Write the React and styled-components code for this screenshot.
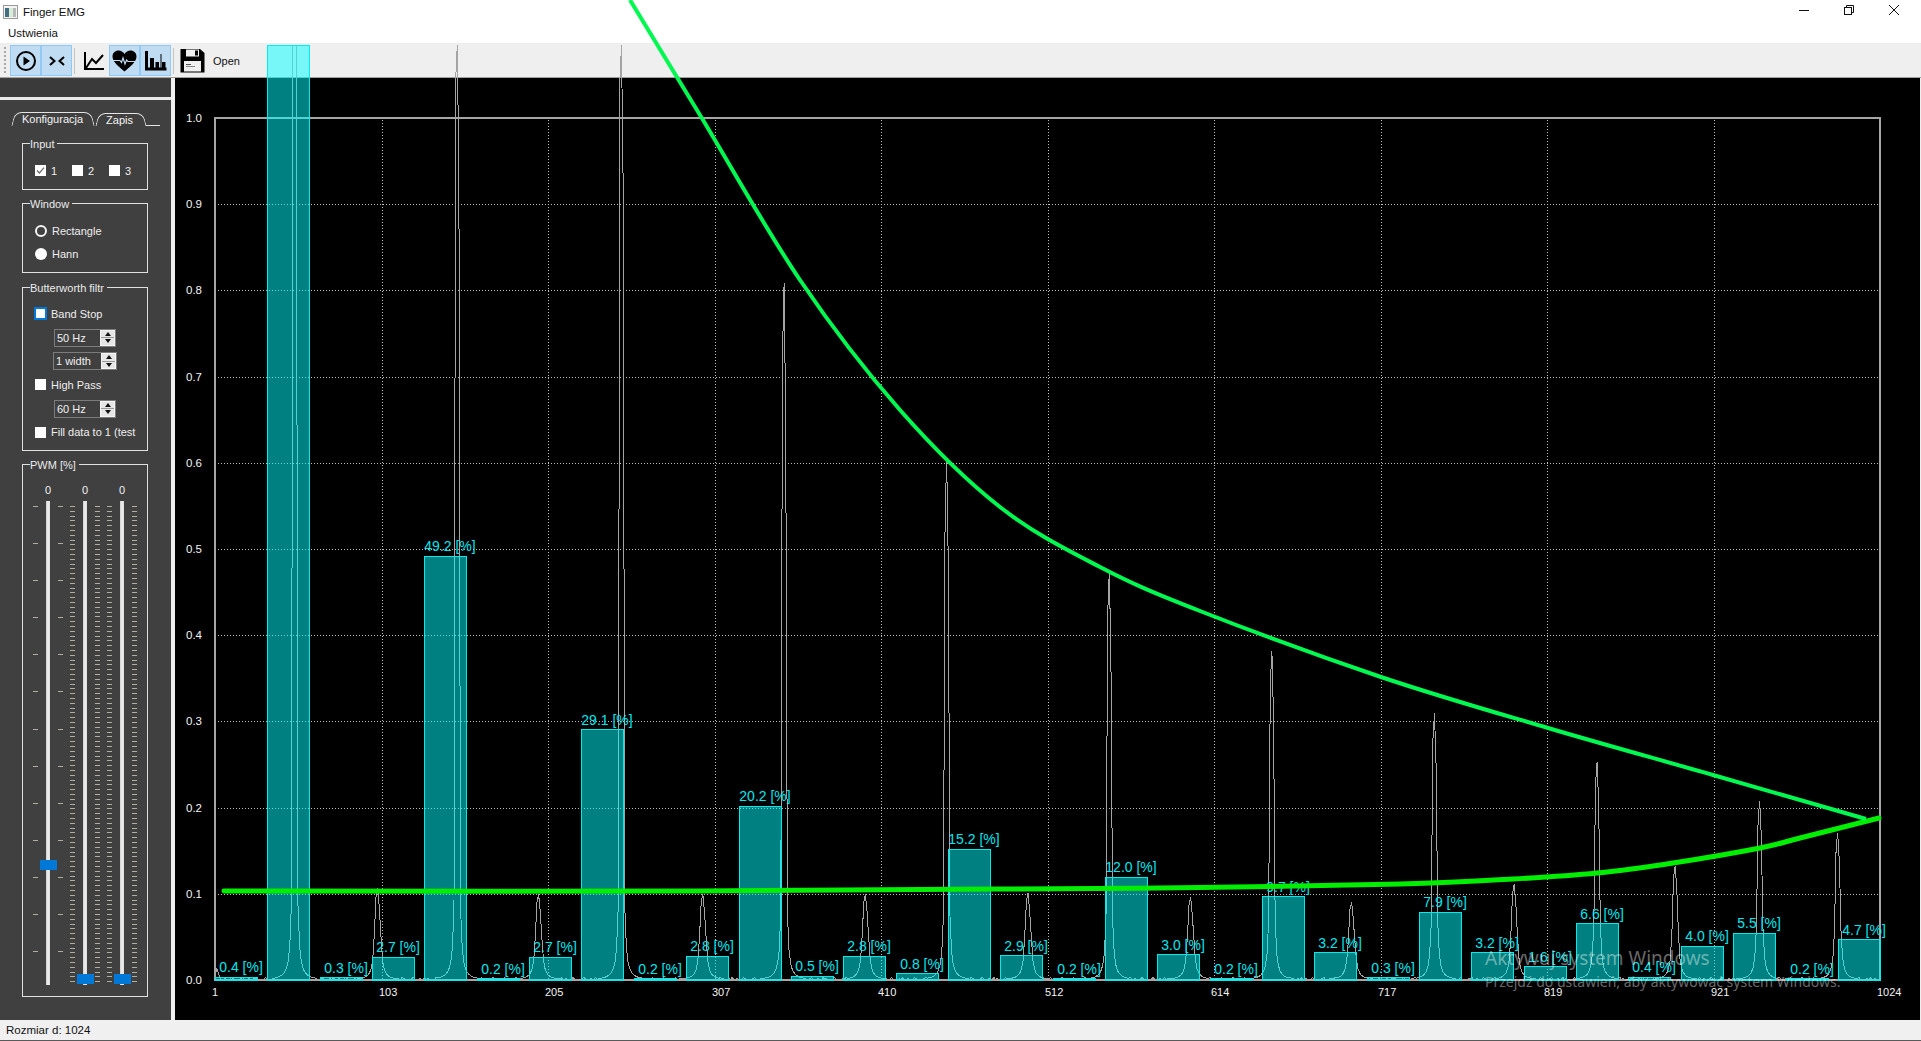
import React from 'react'
import styled, { createGlobalStyle } from 'styled-components'

const GlobalStyle = createGlobalStyle`
  html, body {
    margin: 0;
    padding: 0;
    height: 100%;
    overflow: hidden;
    background: #fff;
    font-family: "Liberation Sans", Arial, sans-serif;
    font-size: 11px;
  }
`

const Window = styled.div`
  width: 1921px;
  height: 1041px;
  display: flex;
  flex-direction: column;
  background: #fff;
  color: #000;
`

const TitleBar = styled.div`
  height: 23px;
  display: flex;
  align-items: center;
  padding-left: 3px;
  font-size: 11.5px;
  color: #111;
`

const TitleText = styled.span`
  margin-left: 5px;
  flex: 1;
`

const WinButton = styled.div`
  width: 45px;
  height: 23px;
  display: flex;
  align-items: center;
  justify-content: center;
  padding-bottom: 3px;
  box-sizing: border-box;
`

const WinButtons = styled.div`
  display: flex;
  margin-right: 5px;
`

const MenuBar = styled.div`
  height: 20px;
  display: flex;
  align-items: center;
  padding-left: 8px;
  border-bottom: 1px solid #ededed;
  color: #111;
  font-size: 11.5px;
`

const Toolbar = styled.div`
  height: 33px;
  display: flex;
  align-items: center;
  background: #efefef;
  border-bottom: 1px solid #a0a0a0;
  padding-left: 4px;
`

const Grip = styled.div`
  width: 2px;
  height: 27px;
  margin-right: 4px;
  background: repeating-linear-gradient(to bottom, #a8a8a8 0 2px, transparent 2px 4px);
`

const ToolButton = styled.div`
  width: 31px;
  height: 31px;
  box-sizing: border-box;
  display: flex;
  align-items: center;
  justify-content: center;
  background: ${p => (p.$checked ? '#c0dcf3' : 'transparent')};
  border: 1px solid ${p => (p.$checked ? '#90c8f6' : 'transparent')};
`

const ToolSeparator = styled.div`
  width: 1px;
  height: 26px;
  margin: 0 ${p => p.$right || 3}px 0 2px;
  background: #c4c4c4;
`

const OpenLabel = styled.span`
  margin-left: 8px;
  font-size: 11px;
  color: #111;
`

const Body = styled.div`
  flex: 1;
  display: flex;
  min-height: 0;
  background: #f0f0f0;
  padding-right: 1px;
`

const Sidebar = styled.div`
  width: 171px;
  display: flex;
  flex-direction: column;
  background: #404040;
  color: #eee;
  flex-shrink: 0;
`

const TopStrip = styled.div`
  height: 18px;
  margin-top: 1px;
  background: #3a3a3a;
  border-bottom: 3px solid #e8e8e8;
`

const Tabs = styled.div`
  display: flex;
  height: 15px;
  margin: 12px 11px 0 11px;
  width: 149px;
  box-sizing: border-box;
`

const Tab = styled.div`
  position: relative;
  width: ${p => p.$w}px;
  height: ${p => (p.$active ? 14 : 13)}px;
  margin-top: ${p => (p.$active ? 0 : 1)}px;
  display: flex;
  align-items: center;
  justify-content: center;
  padding-right: ${p => (p.$active ? 1 : 2)}px;
  box-sizing: border-box;
  color: #f4f4f4;

  &::before,
  &::after {
    content: '';
    position: absolute;
    top: 0;
    bottom: 0;
    width: 50%;
    border-top: 1px solid #e4e4e4;
  }
  &::before {
    left: 2px;
    border-left: 1px solid #e4e4e4;
    border-top-left-radius: 7px;
    transform: skewX(-14deg);
  }
  &::after {
    right: 2px;
    border-right: 1px solid #e4e4e4;
    border-top-right-radius: 7px;
    transform: skewX(14deg);
  }
`

const TabFill = styled.div`
  flex: 1;
  height: 13px;
  border-bottom: 1px solid #e4e4e4;
`

const Group = styled.fieldset`
  margin: ${p => p.$mt}px 0 0 22px;
  padding: 0;
  width: 126px;
  height: ${p => p.$h}px;
  box-sizing: border-box;
  border: 1px solid #e0e0e0;
  min-width: 0;
  overflow: hidden;
`

const Legend = styled.legend`
  margin-left: 7px;
  padding: 0 3px 0 0;
  height: 14px;
  line-height: 16px;
  color: #eaeaea;
`

const InputRow = styled.div`
  display: flex;
  padding: 15px 0 0 12px;
  gap: 8px;
`

const CheckItem = styled.label`
  display: flex;
  align-items: center;
  gap: 5px;
  height: 23.7px;
  white-space: nowrap;
`

const InlineCheck = styled(CheckItem)`
  height: 11px;
  width: 29px;
`

const Box = styled.span`
  width: ${p => (p.$focus ? 13 : 11)}px;
  height: ${p => (p.$focus ? 13 : 11)}px;
  flex-shrink: 0;
  box-sizing: border-box;
  background: #fff;
  border: ${p => (p.$focus ? '2px solid #0078d7' : 'none')};
  margin-left: ${p => (p.$focus ? -1 : 0)}px;
  margin-right: ${p => (p.$focus ? -1 : 0)}px;
  display: flex;
  align-items: center;
  justify-content: center;
`

const RadioStack = styled.div`
  display: flex;
  flex-direction: column;
  padding: 15px 0 0 12px;
  gap: 11px;
`

const RadioItem = styled.label`
  display: flex;
  align-items: center;
  gap: 5px;
  height: 12px;
`

const RadioDot = styled.span`
  width: 12px;
  height: 12px;
  border-radius: 50%;
  box-sizing: border-box;
  background: ${p => (p.$on ? '#404040' : '#fff')};
  border: ${p => (p.$on ? '2px solid #f4f4f4' : 'none')};
`

const FilterStack = styled.div`
  display: flex;
  flex-direction: column;
  padding: 8px 0 0 12px;
`

const SpinRow = styled.div`
  height: 23.7px;
  display: flex;
  align-items: center;
  padding-left: ${p => p.$left}px;
`

const Spin = styled.div`
  width: ${p => p.$w}px;
  height: 18px;
  box-sizing: border-box;
  border: 1px solid #7c7c7c;
  display: flex;
  align-items: center;
  justify-content: space-between;
  padding-left: 2px;
  color: #f0f0f0;
`

const SpinArrows = styled.div`
  width: 15px;
  height: 16px;
  box-sizing: border-box;
  display: flex;
  flex-direction: column;
  background: #e6e6e6;
  border: 1px solid #f4f4f4;
`

const SpinArrow = styled.span`
  flex: 1;
  display: flex;
  align-items: center;
  justify-content: center;
  &::before {
    content: '';
    border-left: 3px solid transparent;
    border-right: 3px solid transparent;
    ${p => (p.$down ? 'border-top: 4px solid #111;' : 'border-bottom: 4px solid #111;')}
  }
  ${p => p.$down && 'border-top: 1px solid #9a9a9a;'}
`

const SliderRow = styled.div`
  display: flex;
  gap: 7px;
  padding: 12px 0 0 10px;
`

const SliderColumn = styled.div`
  width: 30px;
  display: flex;
  flex-direction: column;
  align-items: center;
`

const SliderValue = styled.div`
  height: 14px;
  line-height: 14px;
  margin-bottom: 4px;
  color: #f0f0f0;
`

const SliderBody = styled.div`
  position: relative;
  width: 30px;
  height: 484px;
  display: flex;
  justify-content: space-between;
`

const Ticks = styled.div`
  width: 5px;
  height: 476px;
  margin-top: 5px;
  background: repeating-linear-gradient(
    to bottom,
    #b0b09c 0 1px,
    transparent 1px ${p => p.$step}px
  );
`

const Track = styled.div`
  position: absolute;
  left: 13px;
  top: 0;
  width: 4px;
  height: 484px;
  background: linear-gradient(to right, #cfcfcf, #efefef 50%, #dcdcdc);
`

const Thumb = styled.div`
  position: absolute;
  left: 6.5px;
  width: 17px;
  height: 10px;
  background: #0078d7;
  top: ${p => p.$top}px;
`

const PlotArea = styled.div`
  position: relative;
  z-index: 1;
  margin-left: 4px;
  width: 1745px;
  background: #000;
`

const PlotSvg = styled.svg`
  display: block;
  overflow: visible;
`

const BarLabel = styled.text`
  font-family: "Liberation Sans", Arial, sans-serif;
  font-size: 14px;
  fill: #00e8f0;
  text-anchor: middle;
`

const TickLabel = styled.text`
  font-family: "Liberation Sans", Arial, sans-serif;
  font-size: ${p => p.$size}px;
  fill: #f4f4f4;
`

const Watermark = styled.div`
  position: absolute;
  left: 1310px;
  top: 867px;
  font-family: "Noto Sans", sans-serif;
  color: rgba(255, 255, 255, 0.42);
  white-space: nowrap;
  pointer-events: none;
`

const WatermarkTitle = styled.div`
  font-size: 19px;
  line-height: 27px;
`

const WatermarkHint = styled.div`
  font-size: 14px;
  line-height: 19px;
`

const StatusBar = styled.div`
  height: 20px;
  display: flex;
  align-items: center;
  padding-left: 6px;
  background: #f0f0f0;
  border-bottom: 1px solid #5a5a5a;
  color: #111;
  font-size: 11.5px;
`

const X0 = 215
const X1 = 1880
const Y0 = 980
const YS = 862
const BAR_STEP = 52.35
const BIN = 1.626

const bars = [
  0.4, 108.5, 0.3, 2.7, 49.2, 0.2, 2.7, 29.1, 0.2, 2.8, 20.2, 0.5, 2.8, 0.8, 15.2, 2.9,
  0.2, 12.0, 3.0, 0.2, 9.7, 3.2, 0.3, 7.9, 3.2, 1.6, 6.6, 0.4, 4.0, 5.5, 0.2, 4.7,
]

// x position and height in px of each harmonic
const peaks = [
  [295, 1300], [377, 92], [458, 1000], [539, 86], [621, 1000], [702, 86], [784, 697],
  [865, 86], [947, 519], [1028, 87], [1109, 408], [1190, 83], [1272, 329], [1352, 78],
  [1434, 267], [1514, 96], [1597, 218], [1675, 114], [1760, 179], [1838, 147],
]

const xTicks = ['1', '103', '205', '307', '410', '512', '614', '717', '819', '921', '1024']
const yTicks = ['0.0', '0.1', '0.2', '0.3', '0.4', '0.5', '0.6', '0.7', '0.8', '0.9', '1.0']

const fft = (() => {
  const pts = []
  const count = Math.round((X1 - X0) / BIN)
  for (let b = 0; b <= count; b++) {
    const x = X0 + b * BIN
    let h = b % 7 === 3 ? 2.5 : b % 5 === 1 ? 1.5 : 0.5
    if (b === 1) h = 12
    if (b === 2) h = 7
    peaks.forEach(([px, H]) => {
      const pb = Math.round((px - X0) / BIN)
      const d = Math.abs(b - pb)
      if (d === 0) h = Math.max(h, H)
      else if (d === 1) h = Math.max(h, H * (b < pb ? 0.9 : 0.8))
      else if (d < 14) h = Math.max(h, Math.min(H * 0.5, (73 * Math.pow(H, 0.2)) / (d * d)))
    })
    pts.push(`${x.toFixed(1)},${Math.max(45, Y0 - h).toFixed(1)}`)
  }
  return pts.join(' ')
})()

const smooth = pts => {
  let d = `M${pts[0][0]} ${pts[0][1]}`
  for (let i = 0; i < pts.length - 1; i++) {
    const p0 = pts[i - 1] || pts[i]
    const p1 = pts[i]
    const p2 = pts[i + 1]
    const p3 = pts[i + 2] || p2
    d += ` C${p1[0] + (p2[0] - p0[0]) / 6} ${p1[1] + (p2[1] - p0[1]) / 6} ${p2[0] - (p3[0] - p1[0]) / 6} ${p2[1] - (p3[1] - p1[1]) / 6} ${p2[0]} ${p2[1]}`
  }
  return d
}

const upperCurve = smooth([
  [630, 0], [700, 115], [800, 280], [900, 410], [1000, 507], [1100, 567], [1200, 611],
  [1381, 677], [1548, 728], [1713, 775], [1866, 819],
])

const lowerCurve = smooth([
  [224, 891], [700, 891], [1000, 889], [1200, 887.5], [1400, 884], [1513, 879], [1597, 873],
  [1673, 863], [1760, 848], [1800, 838], [1879, 818],
])

const Plot = () => (
  <PlotSvg width="1745" height="942">
    <g transform="translate(-175 -78)">
      {yTicks.slice(1, 10).map((t, i) => {
        const y = Math.round(Y0 - YS * (i + 1) * 0.1) + 0.5
        return <line key={t} x1="218" x2={X1} y1={y} y2={y} stroke="#bdbdbd" strokeDasharray="1 2" />
      })}
      {xTicks.slice(1, 10).map((t, i) => {
        const x = Math.round(X0 + 166.5 * (i + 1)) + 0.5
        return <line key={t} x1={x} x2={x} y1="120" y2={Y0} stroke="#bdbdbd" strokeDasharray="1 2" />
      })}
      <rect x={X0} y="118" width={X1 - X0} height={Y0 - 118} fill="none" stroke="#a6a6a6" strokeWidth="2" />
      <polyline points={fft} fill="none" stroke="#a4a4a4" strokeWidth="1" shapeRendering="crispEdges" />
      {bars.map((v, i) => {
        const x = Math.round(X0 + i * BAR_STEP)
        const top = Math.max(45, Y0 - (v / 100) * YS)
        return (
          <g key={i}>
            <rect
              x={x + 0.5}
              y={Math.round(top) + 0.5}
              width="42"
              height={Y0 - Math.round(top)}
              fill="rgba(0,255,255,0.5)"
              stroke="#00ecec"
            />
            {v < 100 && (
              <BarLabel x={x + 26} y={top - 4.5}>{`${v.toFixed(1)} [%]`}</BarLabel>
            )}
          </g>
        )
      })}
      {yTicks.map((t, i) => (
        <TickLabel key={t} $size={11.5} x="186" y={Math.round(Y0 - YS * i * 0.1) + 4}>
          {t}
        </TickLabel>
      ))}
      {xTicks.map((t, i) => (
        <TickLabel key={t} $size={11} x={Math.round(X0 + 166.5 * i) - 3} y="996">
          {t}
        </TickLabel>
      ))}
      <path d={lowerCurve} fill="none" stroke="#00ee00" strokeWidth="5" strokeLinecap="round" />
      <path d={upperCurve} fill="none" stroke="#00f850" strokeWidth="4" />
    </g>
  </PlotSvg>
)

const AppIcon = () => (
  <svg width="15" height="14" viewBox="0 0 15 14">
    <rect x="0.5" y="0.5" width="14" height="13" fill="#f4f4f4" stroke="#9a9a9a" />
    <rect x="2" y="3" width="4" height="9" fill="#3f6f80" />
    <rect x="6" y="3" width="4" height="9" fill="#d8ecd8" />
    <rect x="10" y="3" width="3" height="9" fill="#b8b8b8" />
  </svg>
)

const Check = () => (
  <svg width="9" height="9" viewBox="0 0 9 9">
    <path d="M1 4.5 L3.4 7 L8 1.6" fill="none" stroke="#6a6a6a" strokeWidth="1.2" />
  </svg>
)

const Spinner = ({ w, children }) => (
  <Spin $w={w}>
    {children}
    <SpinArrows>
      <SpinArrow />
      <SpinArrow $down />
    </SpinArrows>
  </Spin>
)

const Slider = ({ top, step }) => (
  <SliderColumn>
    <SliderValue>0</SliderValue>
    <SliderBody>
      <Ticks $step={step} />
      <Ticks $step={step} />
      <Track />
      <Thumb $top={top} />
    </SliderBody>
  </SliderColumn>
)

const App = () => (
  <Window>
    <GlobalStyle />
    <TitleBar>
      <AppIcon />
      <TitleText>Finger EMG</TitleText>
      <WinButtons>
        <WinButton>
          <svg width="10" height="10" viewBox="0 0 10 10">
            <path d="M0 5.5 H10" stroke="#111" />
          </svg>
        </WinButton>
        <WinButton>
          <svg width="10" height="10" viewBox="0 0 10 10">
            <rect x="0.5" y="2.5" width="7" height="7" fill="none" stroke="#111" />
            <path d="M2.5 2.5 V0.5 H9.5 V7.5 H7.5" fill="none" stroke="#111" />
          </svg>
        </WinButton>
        <WinButton>
          <svg width="10" height="10" viewBox="0 0 10 10">
            <path d="M0 0 L10 10 M10 0 L0 10" stroke="#111" />
          </svg>
        </WinButton>
      </WinButtons>
    </TitleBar>
    <MenuBar>Ustwienia</MenuBar>
    <Toolbar>
      <Grip />
      <ToolButton $checked>
        <svg width="22" height="22" viewBox="0 0 22 22">
          <circle cx="11" cy="11" r="9" fill="none" stroke="#000" strokeWidth="2" />
          <path d="M8.5 6.5 L15 11 L8.5 15.5 Z" fill="#000" />
        </svg>
      </ToolButton>
      <ToolButton $checked>
        <svg width="18" height="12" viewBox="0 0 18 12">
          <path d="M2 2 L6.5 6 L2 10 M16 2 L11.5 6 L16 10" fill="none" stroke="#000" strokeWidth="2" />
        </svg>
      </ToolButton>
      <ToolSeparator />
      <ToolButton>
        <svg width="22" height="20" viewBox="0 0 22 20">
          <path d="M2 1 V18 H21" fill="none" stroke="#000" strokeWidth="2" />
          <path d="M3 17 L9 8 L13 12 L20 4" fill="none" stroke="#000" strokeWidth="2" />
        </svg>
      </ToolButton>
      <ToolButton $checked>
        <svg width="25" height="22" viewBox="0 0 25 22">
          <path d="M12.5 21.5 C8 17.5 0.5 12.5 0.5 6.5 C0.5 3 3.2 0.5 6.5 0.5 C9 0.5 11.2 1.8 12.5 4 C13.8 1.8 16 0.5 18.5 0.5 C21.8 0.5 24.5 3 24.5 6.5 C24.5 12.5 17 17.5 12.5 21.5 Z" fill="#000" />
          <path d="M1 10.5 H8 L9.5 12.5 L11 8 L13 14 L14.5 10 L16 11.5 H24" fill="none" stroke="#c0dcf3" strokeWidth="1.2" />
        </svg>
      </ToolButton>
      <ToolButton $checked>
        <svg width="22" height="20" viewBox="0 0 22 20">
          <path d="M1.5 0 V18 H21.5" fill="none" stroke="#000" strokeWidth="3" />
          <path d="M5 7 H9 V17 H5 Z M10.5 11 H14 V17 H10.5 Z M15.5 3 H16.5 V17 H15.5 Z M17 11 H20.5 V17 H17 Z" fill="#000" />
        </svg>
      </ToolButton>
      <ToolSeparator $right={6} />
      <svg width="25" height="25" viewBox="0 0 25 25">
        <path d="M0.5 1 H20 L24.5 5 V24.5 H0.5 Z" fill="#000" />
        <rect x="6" y="1.5" width="13" height="7" fill="#f0f0f0" />
        <rect x="15" y="2.5" width="3" height="5" fill="#000" />
        <rect x="4" y="13" width="17" height="10.5" fill="#f0f0f0" />
        <rect x="6" y="16" width="5" height="1" fill="#555" />
        <rect x="6" y="18" width="9" height="1" fill="#888" />
      </svg>
      <OpenLabel>Open</OpenLabel>
    </Toolbar>
    <Body>
      <Sidebar>
        <TopStrip />
        <Tabs>
          <Tab $active $w={84}>Konfiguracja</Tab>
          <Tab $w={51}>Zapis</Tab>
          <TabFill />
        </Tabs>
        <Group $mt={9} $h={54}>
          <Legend>Input</Legend>
          <InputRow>
            <InlineCheck><Box><Check /></Box>1</InlineCheck>
            <InlineCheck><Box />2</InlineCheck>
            <InlineCheck><Box />3</InlineCheck>
          </InputRow>
        </Group>
        <Group $mt={6} $h={77}>
          <Legend>Window</Legend>
          <RadioStack>
            <RadioItem><RadioDot $on />Rectangle</RadioItem>
            <RadioItem><RadioDot />Hann</RadioItem>
          </RadioStack>
        </Group>
        <Group $mt={7} $h={171}>
          <Legend>Butterworth filtr</Legend>
          <FilterStack>
            <CheckItem><Box $focus />Band Stop</CheckItem>
            <SpinRow $left={19}><Spinner w={62}>50 Hz</Spinner></SpinRow>
            <SpinRow $left={18}><Spinner w={64}>1 width</Spinner></SpinRow>
            <CheckItem><Box />High Pass</CheckItem>
            <SpinRow $left={19}><Spinner w={62}>60 Hz</Spinner></SpinRow>
            <CheckItem><Box />Fill data to 1 (test</CheckItem>
          </FilterStack>
        </Group>
        <Group $mt={6} $h={540}>
          <Legend>PWM [%]</Legend>
          <SliderRow>
            <Slider top={359} step={37.1} />
            <Slider top={473} step={4.8} />
            <Slider top={473} step={4.8} />
          </SliderRow>
        </Group>
      </Sidebar>
      <PlotArea>
        <Plot />
        <Watermark>
          <WatermarkTitle>Aktywuj system Windows</WatermarkTitle>
          <WatermarkHint>Przejdź do ustawień, aby aktywować system Windows.</WatermarkHint>
        </Watermark>
      </PlotArea>
    </Body>
    <StatusBar>Rozmiar d: 1024</StatusBar>
  </Window>
)

export default App
